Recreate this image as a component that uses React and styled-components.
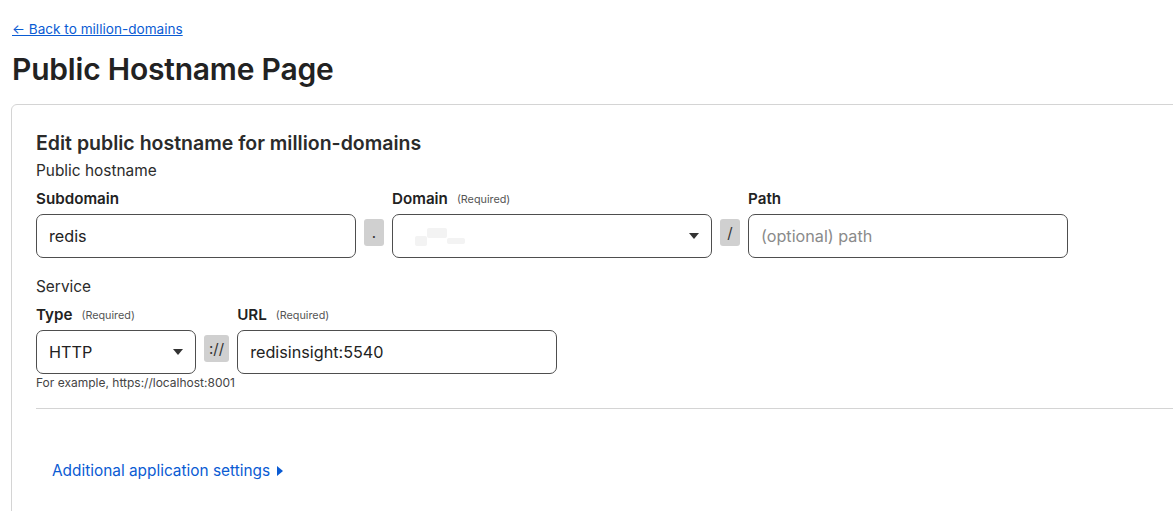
import React from 'react';
import styled, { createGlobalStyle } from 'styled-components';

const GlobalStyle = createGlobalStyle`
  html, body {
    margin: 0;
    padding: 0;
    background: #fff;
    overflow: hidden;
  }
  body {
    font-family: Inter, "Noto Sans", "Liberation Sans", sans-serif;
    color: #222;
  }
`;

const Page = styled.div`
  padding: 21px 0 0 12px;
  width: 1280px;
`;

const BackLink = styled.a`
  display: block;
  width: fit-content;
  font-size: 13.6px;
  line-height: 16px;
  color: #0a5bd3;
  text-decoration: underline;
  cursor: pointer;
`;

const Title = styled.h1`
  margin: 14px 0 0 0;
  font-size: 30px;
  line-height: 36px;
  font-weight: 600;
  color: #222;
  letter-spacing: -0.2px;
`;

const Card = styled.div`
  margin: 17px 0 0 -1px;
  border: 1px solid #d4d4d4;
  border-radius: 6px;
  padding: 26px 24px 40px 24px;
  width: 1240px;
  box-sizing: border-box;
`;

const CardHeading = styled.h2`
  margin: 0;
  font-size: 19.5px;
  line-height: 24px;
  font-weight: 600;
  color: #2b2b2b;
`;

const SectionLabel = styled.div`
  font-size: 15.4px;
  line-height: 20px;
  color: #2b2b2b;
  margin-top: ${p => p.$top || 0}px;
`;

const FieldRow = styled.div`
  display: flex;
  align-items: flex-end;
  gap: 8px;
  margin-top: 8px;
`;

const Field = styled.div`
  display: flex;
  flex-direction: column;
  width: ${p => p.$w}px;
`;

const Label = styled.div`
  height: 20px;
  font-size: 15.2px;
  line-height: 20px;
  font-weight: 600;
  color: #222;
  margin-bottom: 5px;
  display: flex;
  align-items: center;
  gap: 9px;
  white-space: nowrap;
`;

const Required = styled.span`
  font-size: 10.8px;
  line-height: 12px;
  font-weight: 400;
  color: #555;
  padding-top: 2px;
`;

const Box = styled.div`
  position: relative;
  height: 44px;
  box-sizing: border-box;
  border: 1px solid #4e4e4e;
  border-radius: 7px;
  display: flex;
  align-items: center;
  padding: 0 12px;
  font-size: 16.2px;
  color: ${p => (p.$placeholder ? '#8a8a8a' : '#222')};
`;

const Caret = styled.span`
  position: absolute;
  right: 12px;
  top: 18px;
  width: 0;
  height: 0;
  border-left: 5px solid transparent;
  border-right: 5px solid transparent;
  border-top: 6px solid #333;
`;

const Separator = styled.div`
  align-self: flex-end;
  margin-bottom: 12px;
  min-width: 20px;
  padding: 0 ${p => (p.$wide ? 5 : 3)}px;
  height: 27px;
  box-sizing: border-box;
  border-radius: 3px;
  background: #d0d0d0;
  display: flex;
  align-items: center;
  justify-content: center;
  font-size: 15px;
  color: #333;
`;

const Blur = styled.span`
  display: inline-block;
  width: ${p => p.$w}px;
  height: ${p => p.$h}px;
  margin-top: ${p => p.$t}px;
  margin-left: ${p => p.$l || 0}px;
  background: #f3f3f3;
  border-radius: 2px;
`;

const Helper = styled.div`
  font-size: 12px;
  line-height: 14px;
  color: #444;
  margin-top: 2px;
`;

const Divider = styled.hr`
  border: none;
  border-top: 1px solid #d4d4d4;
  margin: 18px 0 0 0;
  width: 1200px;
`;

const Settings = styled.a`
  display: inline-flex;
  align-items: center;
  gap: 7px;
  margin: 52px 0 0 16px;
  font-size: 15.4px;
  line-height: 20px;
  color: #0a5bd3;
  cursor: pointer;
`;

const TriangleRight = styled.span`
  width: 0;
  height: 0;
  border-top: 5px solid transparent;
  border-bottom: 5px solid transparent;
  border-left: 6px solid #0a5bd3;
`;

export default function App() {
  return (
    <>
      <GlobalStyle />
      <Page>
        <BackLink>← Back to million-domains</BackLink>
        <Title>Public Hostname Page</Title>
        <Card>
          <CardHeading>Edit public hostname for million-domains</CardHeading>
          <SectionLabel $top={6}>Public hostname</SectionLabel>
          <FieldRow>
            <Field $w={320}>
              <Label>Subdomain</Label>
              <Box>redis</Box>
            </Field>
            <Separator>.</Separator>
            <Field $w={320}>
              <Label>
                Domain <Required>(Required)</Required>
              </Label>
              <Box>
                <Blur $w={12} $h={10} $t={10} $l={10} />
                <Blur $w={20} $h={10} $t={-6} />
                <Blur $w={18} $h={6} $t={10} />
                <Caret />
              </Box>
            </Field>
            <Separator>/</Separator>
            <Field $w={320}>
              <Label>Path</Label>
              <Box $placeholder>(optional) path</Box>
            </Field>
          </FieldRow>
          <SectionLabel $top={19}>Service</SectionLabel>
          <FieldRow>
            <Field $w={160}>
              <Label>
                Type <Required>(Required)</Required>
              </Label>
              <Box>
                HTTP
                <Caret />
              </Box>
            </Field>
            <Separator $wide>://</Separator>
            <Field $w={320}>
              <Label>
                URL <Required>(Required)</Required>
              </Label>
              <Box>redisinsight:5540</Box>
            </Field>
          </FieldRow>
          <Helper>For example, https://localhost:8001</Helper>
          <Divider />
          <Settings>
            Additional application settings <TriangleRight />
          </Settings>
        </Card>
      </Page>
    </>
  );
}
